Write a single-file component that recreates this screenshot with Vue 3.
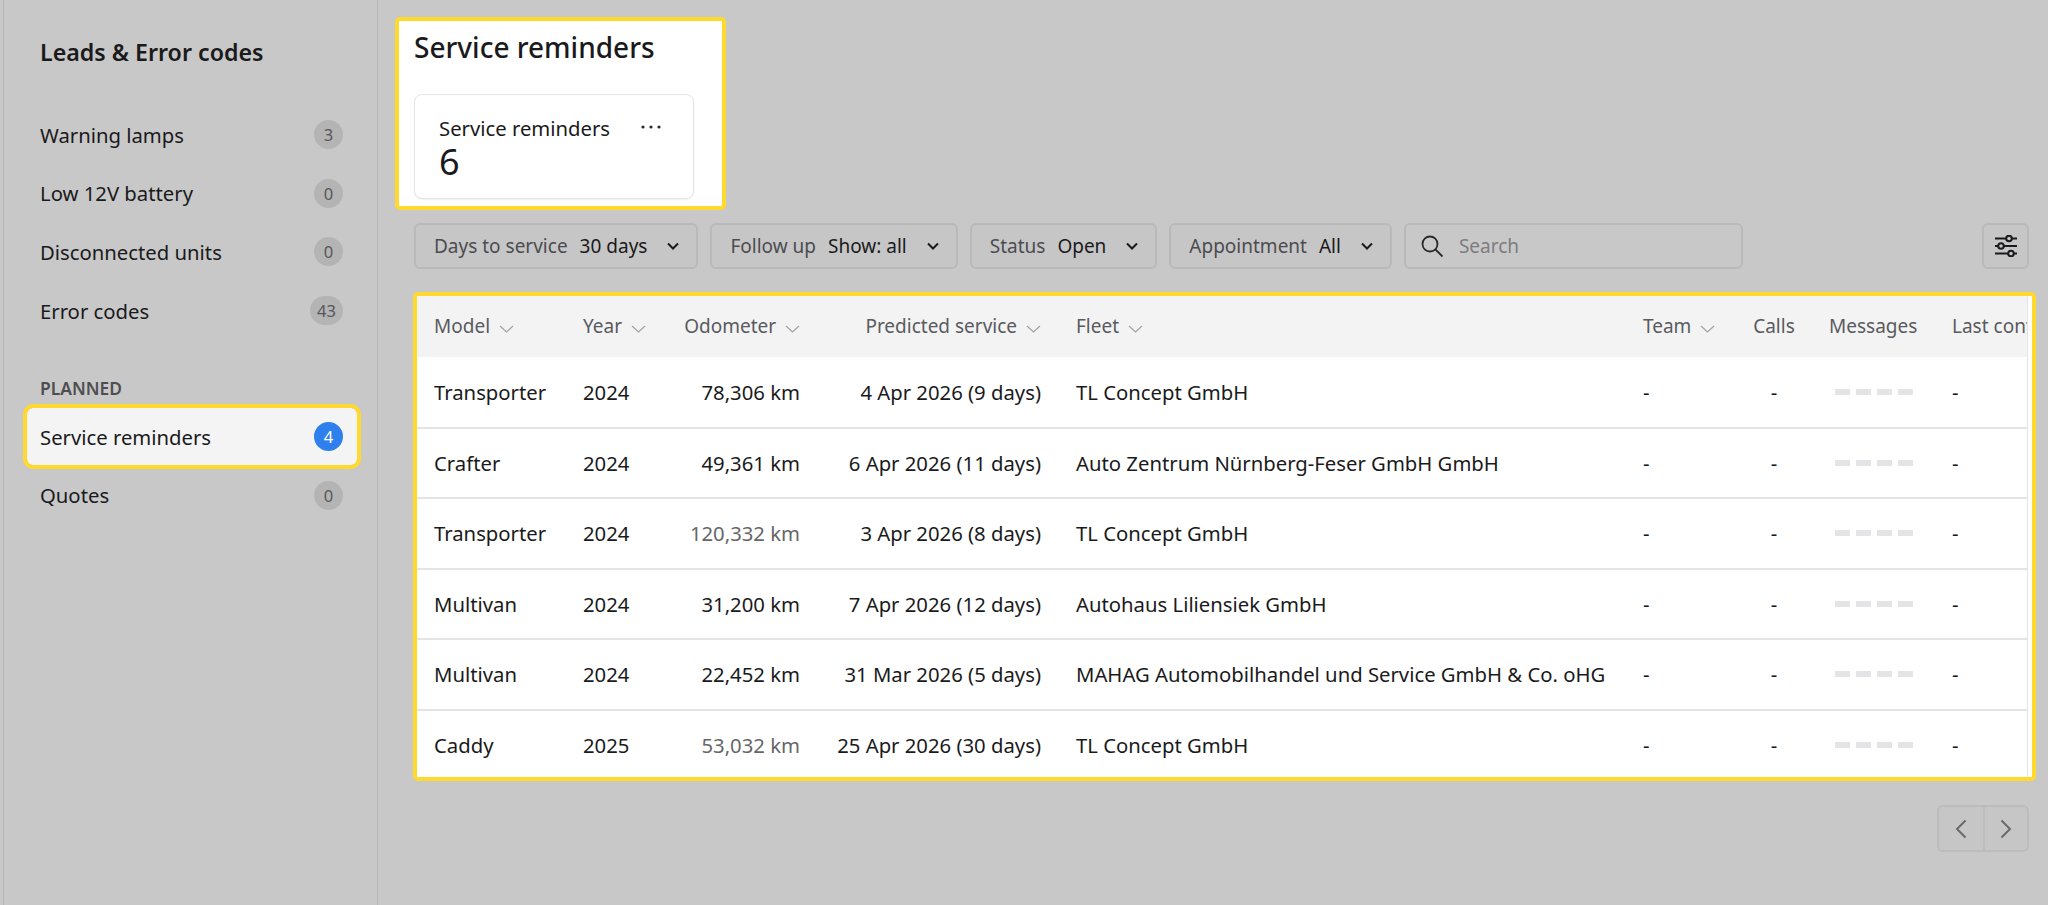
<template>
  <div class="page">
    <aside class="sidebar">
      <h2 class="side-title">Leads &amp; Error codes</h2>
      <a v-for="item in leadItems" :key="item.name" class="nav-row">
        <span>{{ item.name }}</span>
        <span class="badge">{{ item.count }}</span>
      </a>
      <div class="nav-group">PLANNED</div>
      <a v-for="item in plannedItems" :key="item.name" class="nav-row" :class="{ active: item.active }">
        <span>{{ item.name }}</span>
        <span class="badge">{{ item.count }}</span>
      </a>
    </aside>

    <main class="content">
      <section class="summary-panel">
        <h1 class="page-title">Service reminders</h1>
        <div class="stat-card">
          <div class="stat-top">
            <span>Service reminders</span>
            <svg class="dots" width="20" height="4" viewBox="0 0 20 4">
              <circle cx="2" cy="2" r="1.6" />
              <circle cx="10" cy="2" r="1.6" />
              <circle cx="18" cy="2" r="1.6" />
            </svg>
          </div>
          <div class="stat-value">6</div>
        </div>
      </section>

      <div class="filters">
        <button v-for="f in filters" :key="f.label" class="filter">
          <span class="filter-label">{{ f.label }}</span>
          <span class="filter-value">{{ f.value }}</span>
          <svg class="filter-chevron" width="12" height="8" viewBox="0 0 12 8">
            <path d="M1 1.500 6 6.500l5-5" />
          </svg>
        </button>
        <div class="search">
          <svg width="24" height="24" viewBox="0 0 24 24" class="search-icon">
            <circle cx="10" cy="10" r="7.5" />
            <path d="m15.5 15.5 7 7" />
          </svg>
          <span>Search</span>
        </div>
        <button class="settings">
          <svg width="24" height="22" viewBox="0 0 24 22">
            <path d="M1 3.500h11M18 3.500h5M1 11h3M10 11h13M1 18.500h13M20 18.500h3" />
            <circle cx="15" cy="3.500" r="2.800" />
            <circle cx="7" cy="11" r="2.800" />
            <circle cx="17" cy="18.500" r="2.800" />
          </svg>
        </button>
      </div>

      <section class="table-panel">
        <div class="table-wrap">
          <table>
            <colgroup>
              <col v-for="c in columns" :key="c.label" :style="{ width: c.width + 'px' }">
            </colgroup>
            <thead>
              <tr>
                <th v-for="c in columns" :key="c.label" :class="c.align">
                  {{ c.label }}
                  <svg v-if="c.sort" class="sort" width="15" height="8" viewBox="0 0 15 8">
                    <path d="M1 1l6.500 6L14 1" />
                  </svg>
                </th>
              </tr>
            </thead>
            <tbody>
              <tr v-for="(r, i) in rows" :key="i">
                <td>{{ r.model }}</td>
                <td>{{ r.year }}</td>
                <td class="right" :class="{ muted: r.muted }">{{ r.km }} km</td>
                <td class="right">{{ r.service }}</td>
                <td>{{ r.fleet }}</td>
                <td>-</td>
                <td class="center">-</td>
                <td>
                  <div class="skeleton"><i></i><i></i><i></i><i></i></div>
                </td>
                <td>-</td>
              </tr>
            </tbody>
          </table>
        </div>
      </section>

      <div class="pager">
        <button class="pager-btn">
          <svg width="12" height="20" viewBox="0 0 12 20"><path d="M10.500 1.500 2 10l8.500 8.500" /></svg>
        </button>
        <button class="pager-btn">
          <svg width="12" height="20" viewBox="0 0 12 20"><path d="M1.500 1.500 10 10l-8.500 8.500" /></svg>
        </button>
      </div>
    </main>
  </div>
</template>

<script setup>
const leadItems = [
  { name: 'Warning lamps', count: 3 },
  { name: 'Low 12V battery', count: 0 },
  { name: 'Disconnected units', count: 0 },
  { name: 'Error codes', count: 43 },
];

const plannedItems = [
  { name: 'Service reminders', count: 4, active: true },
  { name: 'Quotes', count: 0 },
];

const filters = [
  { label: 'Days to service', value: '30 days' },
  { label: 'Follow up', value: 'Show: all' },
  { label: 'Status', value: 'Open' },
  { label: 'Appointment', value: 'All' },
];

const columns = [
  { label: 'Model', width: 149, sort: true },
  { label: 'Year', width: 100, sort: true },
  { label: 'Odometer', width: 151, sort: true, align: 'right' },
  { label: 'Predicted service', width: 242, sort: true, align: 'right' },
  { label: 'Fleet', width: 567, sort: true },
  { label: 'Team', width: 110, sort: true },
  { label: 'Calls', width: 76, align: 'center' },
  { label: 'Messages', width: 123 },
  { label: 'Last contact', width: 200 },
];

const rows = [
  { model: 'Transporter', year: 2024, km: '78,306', service: '4 Apr 2026 (9 days)', fleet: 'TL Concept GmbH' },
  { model: 'Crafter', year: 2024, km: '49,361', service: '6 Apr 2026 (11 days)', fleet: 'Auto Zentrum Nürnberg-Feser GmbH GmbH' },
  { model: 'Transporter', year: 2024, km: '120,332', muted: true, service: '3 Apr 2026 (8 days)', fleet: 'TL Concept GmbH' },
  { model: 'Multivan', year: 2024, km: '31,200', service: '7 Apr 2026 (12 days)', fleet: 'Autohaus Liliensiek GmbH' },
  { model: 'Multivan', year: 2024, km: '22,452', service: '31 Mar 2026 (5 days)', fleet: 'MAHAG Automobilhandel und Service GmbH & Co. oHG' },
  { model: 'Caddy', year: 2025, km: '53,032', muted: true, service: '25 Apr 2026 (30 days)', fleet: 'TL Concept GmbH' },
];
</script>

<style>
html, body {
  margin: 0;
  background: #c8c8c8;
}
</style>

<style scoped>
.page {
  display: flex;
  height: 905px;
  overflow: hidden;
  background: #c8c8c8;
  color: #1a1a1c;
  font-family: "Noto Sans", "Liberation Sans", sans-serif;
  font-size: 20.300px;
}

.sidebar {
  flex: 0 0 375px;
  margin-left: 3px;
  box-sizing: border-box;
  border-left: 1px solid #b6b6b6;
  border-right: 1px solid #b6b6b6;
  padding: 0 20px 0 23px;
}
.side-title {
  margin: 0 0 38px 13px;
  padding-top: 37px;
  font-size: 23.200px;
  line-height: 31px;
  font-weight: 600;
}
.nav-row {
  display: flex;
  align-items: center;
  justify-content: space-between;
  height: 57px;
  margin-bottom: 1.700px;
  padding: 0 14px 0 13px;
  border-radius: 6px;
}
.nav-row.active {
  background: #f4f4f4;
  outline: 4px solid #ffd92e;
}
.badge {
  min-width: 29px;
  height: 29px;
  box-sizing: border-box;
  padding: 0 7px;
  border-radius: 15px;
  background: #b4b4b4;
  color: #57575b;
  font-size: 16.500px;
  line-height: 29px;
  text-align: center;
}
.active .badge {
  background: #2f80ed;
  color: #fff;
}
.nav-group {
  margin: 38px 0 9px 13px;
  color: #4e4e52;
  font-size: 17.400px;
  line-height: 22px;
  font-weight: 600;
}

.content {
  flex: 1;
  min-width: 0;
  padding: 17px 19px 0 36px;
}
.summary-panel {
  width: 331px;
  height: 193px;
  box-sizing: border-box;
  margin-left: -19px;
  padding: 6px 15px 0;
  border: 4px solid #ffd92e;
  border-radius: 5px;
  background: #fff;
}
.page-title {
  margin: 0 0 27px;
  font-size: 28px;
  line-height: 40px;
  font-weight: 500;
}
.stat-card {
  width: 280px;
  height: 105px;
  box-sizing: border-box;
  padding: 20px 24px;
  border: 1px solid #e4e4e6;
  border-radius: 8px;
  box-shadow: 0 1px 2px rgba(0, 0, 0, 0.06);
}
.stat-top {
  display: flex;
  align-items: center;
  justify-content: space-between;
  height: 26px;
  padding-right: 8px;
}
.dots {
  fill: #2a2a2c;
  margin-bottom: 2px;
}
.stat-value {
  font-size: 36px;
  line-height: 44px;
  margin-top: -1px;
}

.filters {
  display: flex;
  gap: 12px;
  margin-top: 13px;
}
.filter {
  display: flex;
  align-items: center;
  height: 46px;
  padding: 0 17px 0 18px;
  border: 2px solid #b9b9b9;
  border-radius: 6px;
  background: #c6c6c6;
  color: #1a1a1c;
  font: inherit;
  font-size: 19px;
}
.filter-label {
  color: #4c4c50;
  margin-right: 12px;
}
.filter-chevron {
  margin-left: 20px;
  fill: none;
  stroke: #1a1a1c;
  stroke-width: 2;
}
.search {
  display: flex;
  align-items: center;
  width: 339px;
  height: 46px;
  box-sizing: border-box;
  padding-left: 14px;
  border: 2px solid #b9b9b9;
  border-radius: 6px;
  color: #7d7d80;
  font-size: 19px;
}
.search-icon {
  margin-right: 15px;
  fill: none;
  stroke: #2a2a2c;
  stroke-width: 1.800;
}
.settings {
  display: flex;
  align-items: center;
  justify-content: center;
  width: 47px;
  height: 46px;
  margin-left: auto;
  padding: 0;
  border: 2px solid #b9b9b9;
  border-radius: 6px;
  background: #c6c6c6;
}
.settings svg {
  fill: #c6c6c6;
  stroke: #1a1a1c;
  stroke-width: 2;
}

.table-panel {
  height: 489px;
  box-sizing: border-box;
  margin: 23px -7px 0 -1px;
  padding-right: 4px;
  border: 4px solid #ffd92e;
  border-radius: 5px;
  background: #fff;
  overflow: hidden;
}
.table-wrap {
  height: 100%;
  border-right: 1px solid #e4e4e6;
  overflow: hidden;
}
table {
  width: 1718px;
  table-layout: fixed;
  border-collapse: collapse;
}
th {
  height: 61px;
  padding: 0 17px 2px;
  box-sizing: border-box;
  background: #f3f3f3;
  color: #5a5a5f;
  font-size: 19px;
  font-weight: 400;
  text-align: left;
  white-space: nowrap;
}
td {
  height: 70.500px;
  padding: 0 17px;
  box-sizing: border-box;
  border-bottom: 2px solid #e4e4e6;
  white-space: nowrap;
}
th:nth-child(4), td:nth-child(4) {
  padding-right: 18px;
}
.right {
  text-align: right;
}
.center {
  text-align: center;
}
.muted {
  color: #66666a;
}
.sort {
  margin-left: 4px;
  fill: none;
  stroke: #a2a2a6;
  stroke-width: 1.200;
}
.skeleton {
  display: flex;
  gap: 6px;
  justify-content: center;
}
.skeleton i {
  width: 15px;
  height: 6px;
  background: #e4e4e6;
}

.pager {
  display: flex;
  justify-content: flex-end;
  margin-top: 24px;
}
.pager-btn {
  display: flex;
  align-items: center;
  justify-content: center;
  width: 46px;
  height: 47px;
  padding: 0;
  border: 2px solid #bcbcbc;
  border-radius: 0 6px 6px 0;
  background: #c6c6c6;
}
.pager-btn:first-child {
  border-right: 0;
  border-radius: 6px 0 0 6px;
}
.pager-btn svg {
  fill: none;
  stroke: #6a6a6a;
  stroke-width: 2;
}
</style>
